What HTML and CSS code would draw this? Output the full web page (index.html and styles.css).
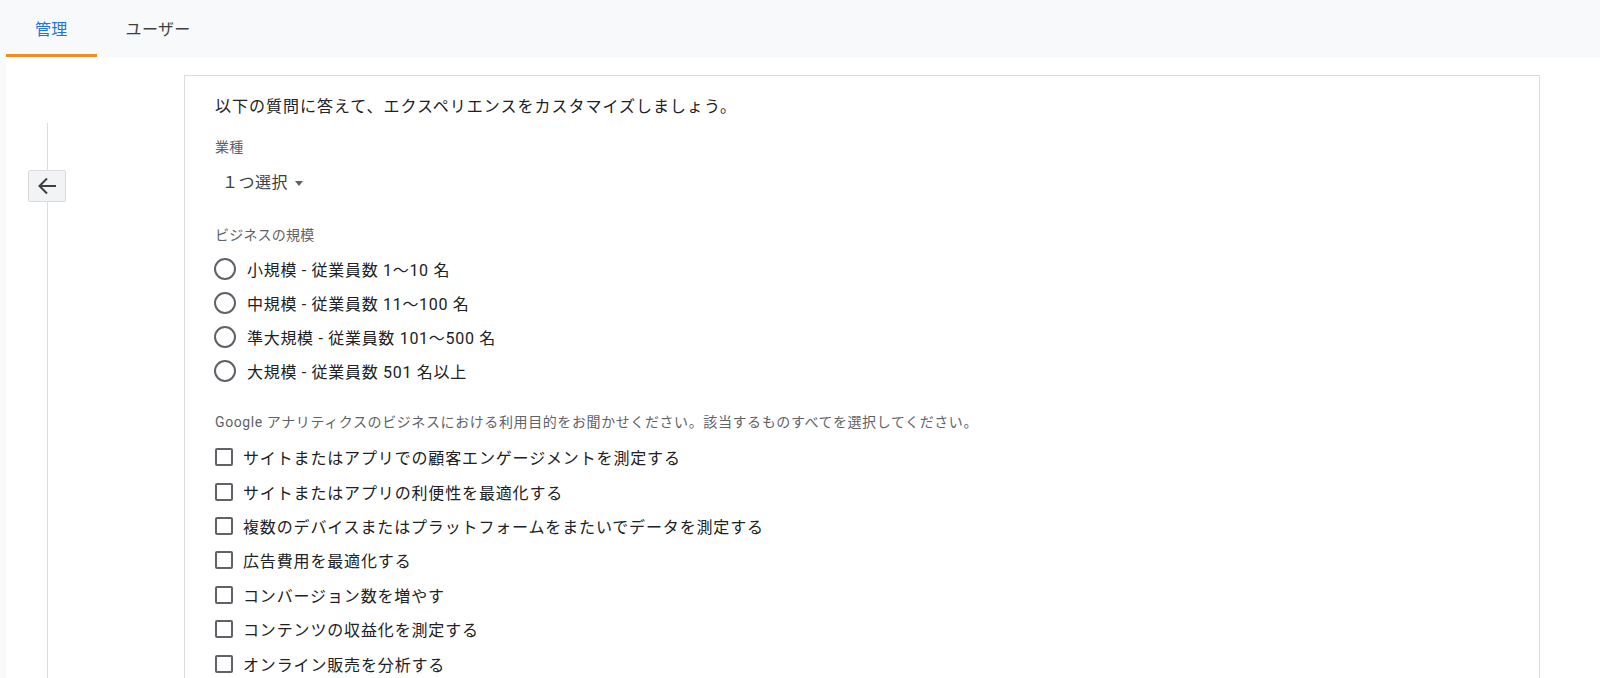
FILE: index.html
```html
<!DOCTYPE html>
<html lang="ja">
<head>
<meta charset="utf-8">
<title>管理</title>
<link rel="stylesheet" href="styles.css">
</head>
<body>
<header class="tabs">
  <div class="tab tab-active">管理</div>
  <div class="tab">ユーザー</div>
</header>
<main class="panel">
  <aside class="rail">
    <div class="rail-space"></div>
    <div class="rail-line rail-short"></div>
    <button class="back" type="button" aria-label="戻る">
      <svg width="24" height="24" viewBox="0 0 24 24" fill="none" stroke="#3c4043" stroke-width="2" stroke-linecap="butt" stroke-linejoin="miter">
        <path d="M21 12H4.5"/>
        <path d="M12 4.5L4.5 12l7.5 7.5"/>
      </svg>
    </button>
    <div class="rail-line rail-grow"></div>
  </aside>
  <section class="card">
    <p class="intro">以下の質問に答えて、エクスペリエンスをカスタマイズしましょう。</p>

    <div class="label label-first">業種</div>
    <div class="select">１つ選択<span class="caret"></span></div>

    <div class="label label-size">ビジネスの規模</div>
    <ul class="options options-radio">
      <li class="option"><span class="radio"></span>小規模 - 従業員数 1〜10 名</li>
      <li class="option"><span class="radio"></span>中規模 - 従業員数 11〜100 名</li>
      <li class="option"><span class="radio"></span>準大規模 - 従業員数 101〜500 名</li>
      <li class="option"><span class="radio"></span>大規模 - 従業員数 501 名以上</li>
    </ul>

    <div class="label label-goal">Google アナリティクスのビジネスにおける利用目的をお聞かせください。該当するものすべてを選択してください。</div>
    <ul class="options options-check">
      <li class="option check-row"><span class="checkbox"></span>サイトまたはアプリでの顧客エンゲージメントを測定する</li>
      <li class="option check-row"><span class="checkbox"></span>サイトまたはアプリの利便性を最適化する</li>
      <li class="option check-row"><span class="checkbox"></span>複数のデバイスまたはプラットフォームをまたいでデータを測定する</li>
      <li class="option check-row"><span class="checkbox"></span>広告費用を最適化する</li>
      <li class="option check-row"><span class="checkbox"></span>コンバージョン数を増やす</li>
      <li class="option check-row"><span class="checkbox"></span>コンテンツの収益化を測定する</li>
      <li class="option check-row"><span class="checkbox"></span>オンライン販売を分析する</li>
    </ul>
  </section>
</main>
</body>
</html>
```
FILE: styles.css
```css
* {
  box-sizing: border-box;
}

html, body {
  margin: 0;
  padding: 0;
}

body {
  width: 1600px;
  height: 678px;
  overflow: hidden;
  background: #f8f9fa;
  font-family: Roboto, "Noto Sans CJK JP", sans-serif;
  color: #202124;
}

.tabs {
  display: flex;
  height: 57px;
  padding-left: 6px;
}

.tab {
  display: flex;
  align-items: center;
  height: 57px;
  padding: 2px 29px 0;
  border-bottom: 3px solid transparent;
  font-size: 16px;
  letter-spacing: 0.3px;
  color: #3c4043;
}

.tab-active {
  color: #1a73e8;
  border-bottom-color: #f68b1f;
}

.panel {
  display: flex;
  align-items: flex-start;
  height: 621px;
  margin-left: 6px;
  background: #ffffff;
  overflow: hidden;
}

.rail {
  display: flex;
  flex-direction: column;
  align-items: center;
  width: 38px;
  height: 621px;
  margin-left: 22px;
  flex-shrink: 0;
}

.rail-space {
  height: 66px;
}

.rail-line {
  width: 1px;
  background: #dadce0;
}

.rail-short {
  height: 47px;
}

.rail-grow {
  flex: 1;
}

.back {
  display: flex;
  align-items: center;
  justify-content: center;
  width: 38px;
  height: 32px;
  padding: 0;
  border: 1px solid #dadce0;
  border-radius: 2px;
  background: #f1f3f4;
}

.card {
  width: 1356px;
  margin-top: 18px;
  margin-left: 118px;
  padding: 19px 0 40px 30px;
  border: 1px solid #dadce0;
  flex-shrink: 0;
}

.intro {
  margin: 0;
  font-size: 16px;
  line-height: 24px;
  letter-spacing: 1px;
}

.label {
  font-size: 14px;
  line-height: 20px;
  letter-spacing: 0.2px;
  color: #5f6368;
}

.label-first {
  margin-top: 18px;
}

.select {
  display: flex;
  align-items: center;
  margin-top: 14px;
  padding-left: 7px;
  font-size: 16px;
  line-height: 24px;
  letter-spacing: 0.5px;
  color: #3c4043;
}

.caret {
  width: 0;
  height: 0;
  margin-left: 7px;
  border-left: 4px solid transparent;
  border-right: 4px solid transparent;
  border-top: 5px solid #5f6368;
}

.label-size {
  margin-top: 30px;
}

.options {
  list-style: none;
  margin: 0;
  padding: 0;
}

.options-radio {
  margin-top: 7px;
}

.option {
  display: flex;
  align-items: center;
  gap: 11px;
  height: 34px;
  font-size: 16px;
  letter-spacing: 0.7px;
  color: #202124;
}

.radio {
  width: 22px;
  height: 22px;
  margin-left: -1px;
  border: 2px solid #5f6368;
  border-radius: 50%;
  flex-shrink: 0;
}

.label-goal {
  margin-top: 24px;
  letter-spacing: 0.6px;
}

.options-check {
  margin-top: 8px;
}

.check-row {
  height: 34.4px;
  gap: 10px;
  letter-spacing: 0.85px;
}

.checkbox {
  width: 18px;
  height: 18px;
  border: 2px solid #5f6368;
  border-radius: 2px;
  flex-shrink: 0;
}
```
